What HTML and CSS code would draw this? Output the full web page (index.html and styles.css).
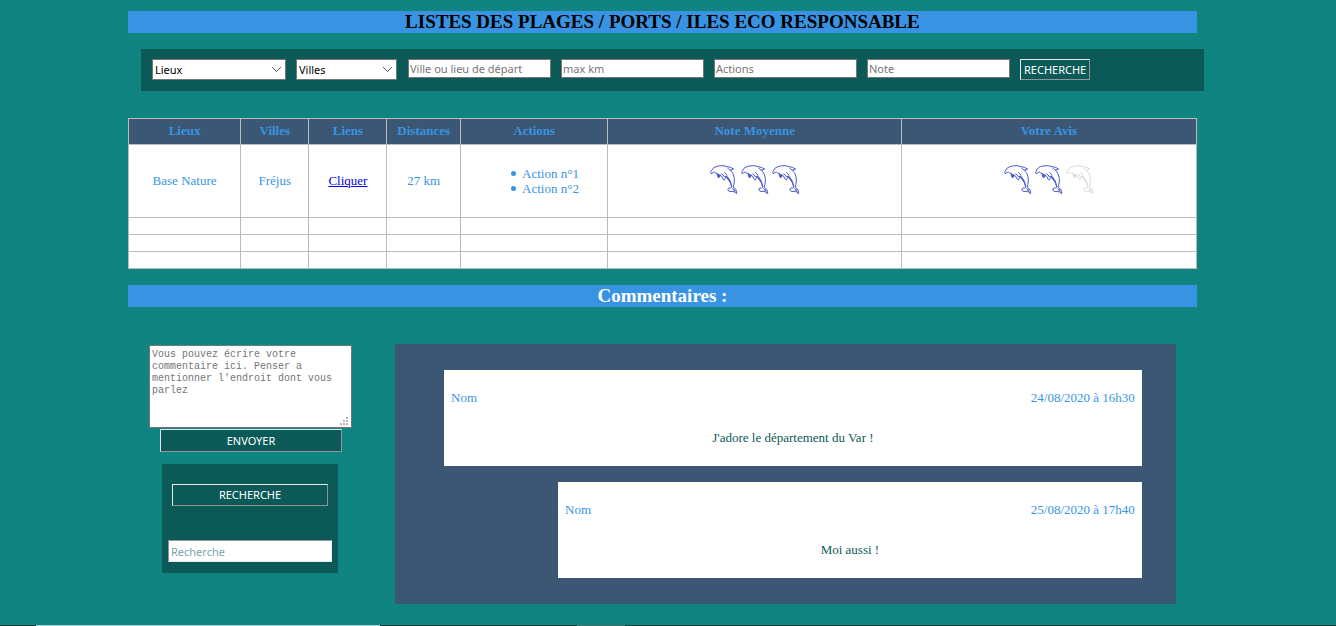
FILE: index.html
```
<!DOCTYPE html>
<html lang="fr">
<head>
<meta charset="utf-8">
<title>Plages, ports et îles éco responsables</title>
<link rel="stylesheet" href="styles.css">
</head>
<body>
<svg class="sprite" aria-hidden="true">
  <symbol id="dolphin" viewBox="0 0 84 90">
    <path class="line" d="M13 21 L3 26 Q0 22 4 18 Q8 5 24 3 Q40 0 52 5 Q62 6 71 12 Q66 15 61 15 Q74 28 73 48 Q73 58 69 66 Q81 72 80 86 Q73 79 66 79 Q60 82 54 76 Q52 71 57 69 Q62 70 65 67 Q64 54 56 45 Q50 37 46 33 Q47 43 43 45 Q37 43 36 35 Q33 32 30 31 Q30 38 25 38 Q21 32 22 25 Q16 25 13 21 Z"/>
    <path class="line" d="M52 8 Q56 14 62 16 M43 22 Q49 26 51 32 M34 26 Q41 29 43 36"/>
    <path class="fill" d="M20 25 L32 29 L27 38 L22 34 Z M46 33 Q50 30 55 37 Q65 48 67 65 L63 62 Q62 51 52 42 Z M66 68 L75 74 L78 84 L70 76 Z"/>
  </symbol>
</svg>
<main class="page">
  <h1 class="banner">LISTES DES PLAGES / PORTS / ILES ECO RESPONSABLE</h1>
  <form class="filters">
    <select class="field places" aria-label="Lieux"><option>Lieux</option></select>
    <select class="field towns" aria-label="Villes"><option>Villes</option></select>
    <input class="field" type="text" placeholder="Ville ou lieu de départ" aria-label="Ville ou lieu de départ">
    <input class="field" type="text" placeholder="max km" aria-label="max km">
    <input class="field" type="text" placeholder="Actions" aria-label="Actions">
    <input class="field" type="text" placeholder="Note" aria-label="Note">
    <button class="button" type="button">RECHERCHE</button>
  </form>
  <table class="beaches">
    <colgroup><col class="c-place"><col class="c-town"><col class="c-link"><col class="c-distance"><col class="c-actions"><col class="c-score"><col></colgroup>
    <thead>
      <tr><th>Lieux</th><th>Villes</th><th>Liens</th><th>Distances</th><th>Actions</th><th>Note Moyenne</th><th>Votre Avis</th></tr>
    </thead>
    <tbody>
      <tr class="entry">
        <td>Base Nature</td><td>Fréjus</td><td><a href="#">Cliquer</a></td><td>27 km</td>
        <td><ul class="actions"><li>Action n°1</li><li>Action n°2</li></ul></td>
        <td><div class="score"><svg class="dolphin"><use href="#dolphin"/></svg><svg class="dolphin"><use href="#dolphin"/></svg><svg class="dolphin"><use href="#dolphin"/></svg></div></td>
        <td><div class="score"><svg class="dolphin"><use href="#dolphin"/></svg><svg class="dolphin"><use href="#dolphin"/></svg><svg class="dolphin off"><use href="#dolphin"/></svg></div></td>
      </tr>
      <tr><td></td><td></td><td></td><td></td><td></td><td></td><td></td></tr>
      <tr><td></td><td></td><td></td><td></td><td></td><td></td><td></td></tr>
      <tr><td></td><td></td><td></td><td></td><td></td><td></td><td></td></tr>
    </tbody>
  </table>
  <h2 class="banner light">Commentaires :</h2>
  <div class="columns">
    <aside class="side">
      <form class="write">
        <textarea class="message" aria-label="Commentaire" placeholder="Vous pouvez écrire votre commentaire ici. Penser a mentionner l'endroit dont vous parlez"></textarea>
        <button class="button send" type="button">ENVOYER</button>
      </form>
      <form class="search">
        <button class="button" type="button">RECHERCHE</button>
        <input class="query" type="text" placeholder="Recherche" aria-label="Recherche">
      </form>
    </aside>
    <section class="comments">
      <article class="comment">
        <header class="meta"><span>Nom</span><time>24/08/2020 à 16h30</time></header>
        <p class="text">J'adore le département du Var !</p>
      </article>
      <article class="comment reply">
        <header class="meta"><span>Nom</span><time>25/08/2020 à 17h40</time></header>
        <p class="text">Moi aussi !</p>
      </article>
    </section>
  </div>
</main>
<footer class="edge"><span class="edge-light"></span><span class="edge-grey"></span></footer>
</body>
</html>
```

FILE: styles.css
```
* { box-sizing: border-box; }
body {
  margin: 0;
  min-height: 100vh;
  display: flex;
  flex-direction: column;
  background: #108480;
  color: #3894e2;
  font: 13px/15px "Liberation Serif", "Times New Roman", serif;
}
.sprite { position: absolute; width: 0; height: 0; }
.page { flex: 1; width: 80%; margin-left: 128px; padding-top: 11px; }
.banner {
  margin: 0;
  background: #3894e2;
  color: #000;
  font-size: 19px;
  line-height: 22px;
  text-align: center;
}
.light { margin-top: 16px; color: #fff; }

.filters {
  display: flex;
  align-items: flex-start;
  gap: 10px;
  margin: 16px -7px 27px 13px;
  padding: 10px 11px 11px;
  background: #0b5a57;
}
.field, .button, .query { font: 11px/15px Tahoma, "Noto Sans", sans-serif; border-radius: 0; margin: 0; }
.field { width: 143px; height: 19px; padding: 0 1px; border: 1px solid #767676; background: #fff; color: #000; }
.field::placeholder { color: #757575; opacity: 1; }
select.field {
  height: 21px;
  padding: 0 2px;
  appearance: none;
  background-image:
    linear-gradient(45deg, transparent 46%, #555 47% 57%, transparent 58%),
    linear-gradient(-45deg, transparent 46%, #555 47% 57%, transparent 58%);
  background-size: 5px 5px;
  background-repeat: no-repeat;
  background-position: right 8px center, right 4px center;
}
select.places { width: 134px; }
select.towns { width: 101px; margin-right: 1px; }
.button {
  height: 21px;
  padding: 0 3px;
  border: 1px outset #e8e8e8;
  background: #0b5a57;
  color: #fff;
}

.beaches { width: 100%; table-layout: fixed; border-collapse: collapse; background: #fff; text-align: center; }
.beaches th, .beaches td { border: 1px solid #bcbcbc; padding: 0; height: 17px; }
.beaches th { height: 26px; padding-bottom: 2px; background: #3c5773; }
.beaches .entry td { height: 73px; padding-bottom: 2px; }
.beaches a { color: #0000ee; }
.c-place { width: 10.5%; }
.c-town { width: 6.4%; }
.c-link { width: 7.3%; }
.c-distance { width: 6.9%; }
.c-actions { width: 13.8%; }
.c-score { width: 27.5%; }
.actions { margin: 1px 0 0; padding-left: 50px; list-style: none; text-align: left; }
.actions li { display: flex; align-items: center; gap: 6px; }
.actions li::before { content: ""; width: 5px; height: 5px; border-radius: 50%; background: currentColor; }
.score { display: flex; justify-content: center; gap: 3px; }
.dolphin { width: 28px; height: 30px; color: #4a5cc8; }
.dolphin.off { color: #dcdcdc; }
.line { fill: none; stroke: currentColor; stroke-width: 3; stroke-linejoin: round; }
.fill { fill: currentColor; }

.columns { display: flex; align-items: flex-start; margin-top: 37px; padding: 0 21px; }
.side { width: 203px; margin-right: 43px; }
.write { display: flex; flex-direction: column; padding-top: 1px; }
.message {
  height: 83px;
  padding: 3px 2px 2px;
  border: 1px solid #767676;
  border-radius: 0;
  background: #fff;
  font: 10px/12px "Courier New", "Liberation Mono", monospace;
  resize: both;
}
.message::placeholder { color: #757575; opacity: 1; }
.message::-webkit-resizer {
  background:
    conic-gradient(from 90deg at 1px 1px, transparent 90deg, transparent 0),
    linear-gradient(#b8b8b8, #b8b8b8) right 3px bottom 2px / 2px 2px no-repeat,
    linear-gradient(#b8b8b8, #b8b8b8) right 6px bottom 2px / 2px 2px no-repeat,
    linear-gradient(#b8b8b8, #b8b8b8) right 9px bottom 2px / 2px 2px no-repeat,
    linear-gradient(#b8b8b8, #b8b8b8) right 3px bottom 5px / 2px 2px no-repeat,
    linear-gradient(#b8b8b8, #b8b8b8) right 6px bottom 5px / 2px 2px no-repeat,
    linear-gradient(#b8b8b8, #b8b8b8) right 3px bottom 8px / 2px 2px no-repeat,
    #fff;
}
.send { height: 23px; margin: 1px 10px 0 11px; }
.search { display: flex; flex-direction: column; gap: 34px; margin: 12px 14px 0 13px; padding: 20px 6px 11px; background: #0b5a57; }
.search .button { height: 22px; margin: 0 4px; padding-bottom: 2px; }
.query { width: 100%; height: 22px; padding: 1px 2px; border: 1px inset #e8e8e8; background: #fff; }
.query::placeholder { color: #77a5a8; opacity: 1; }

.comments { flex: 1; padding: 26px 34px 26px 49px; background: #3c5773; }
.comment { padding: 20px 7px; background: #fff; min-height: 96px; }
.reply { margin: 16px 0 0 114px; }
.meta { display: flex; justify-content: space-between; }
.text { margin: 25px 0 0; color: #0b5a57; text-align: center; }

.edge { display: flex; height: 1px; padding-left: 36px; background: #1c3a38; }
.edge-light { width: 344px; background: #a9d2d0; }
.edge-grey { width: 48px; margin-left: 197px; background: #4b6a68; }
```
